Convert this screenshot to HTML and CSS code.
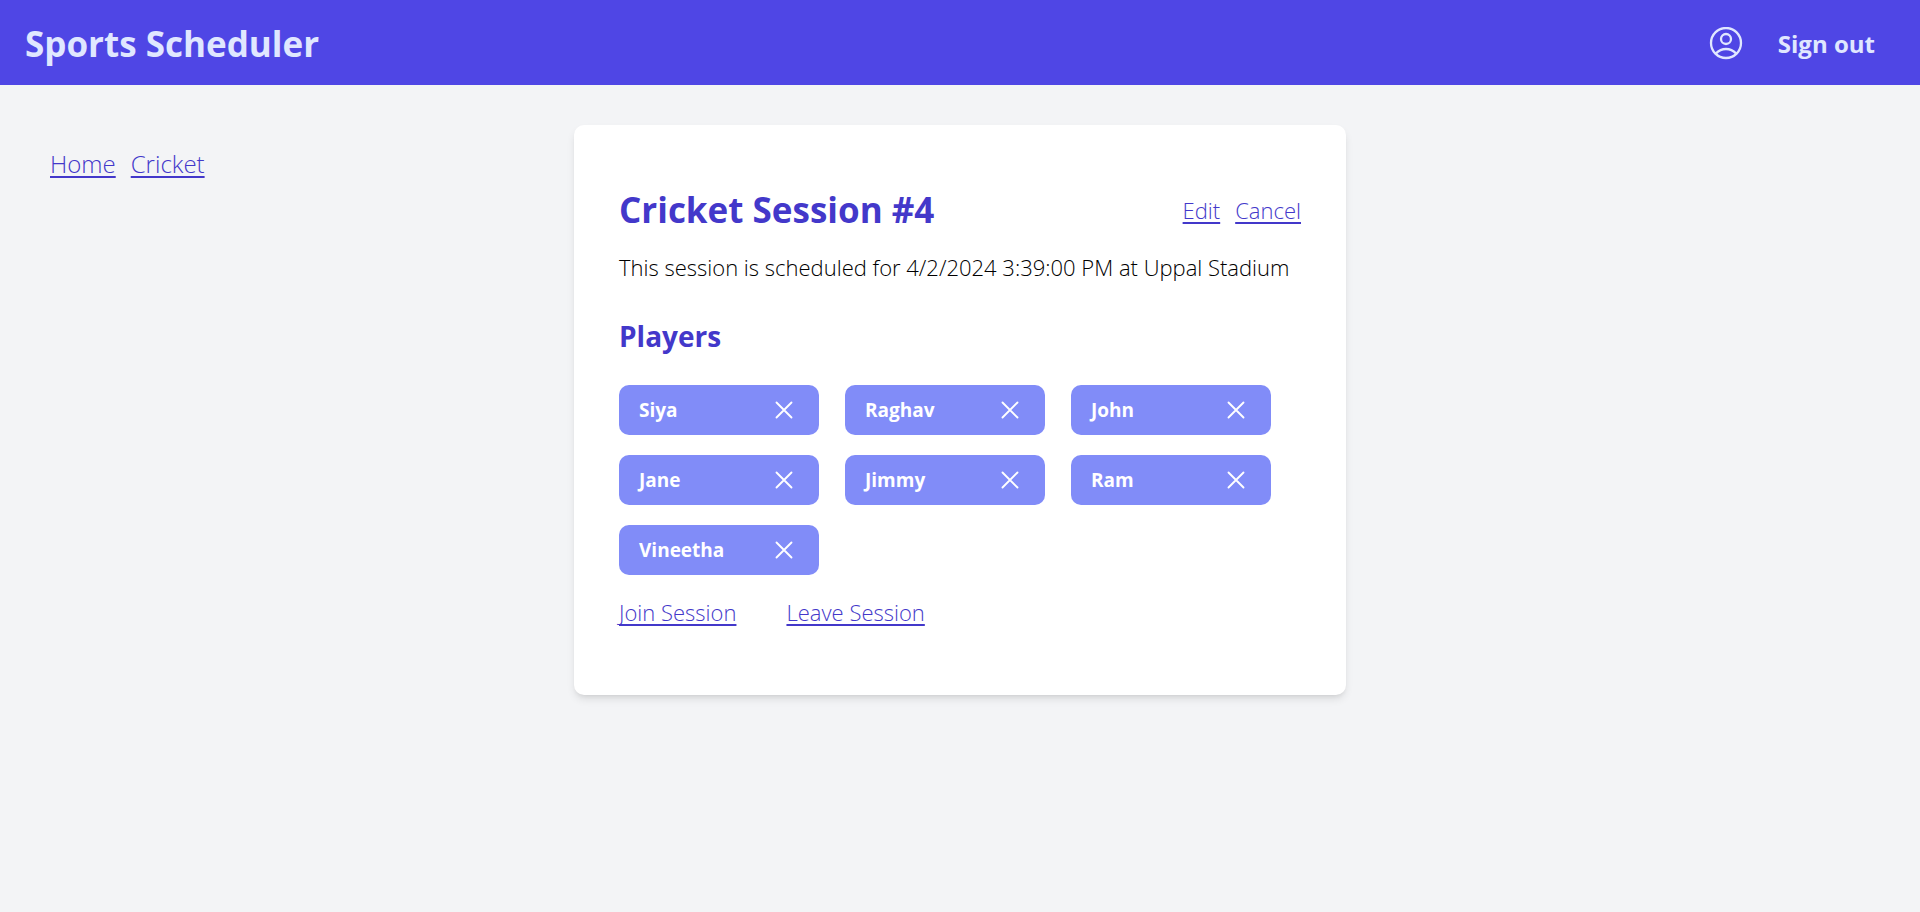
FILE: index.html
```html
<!DOCTYPE html>
<html lang="en">
<head>
  <meta charset="utf-8">
  <meta name="viewport" content="width=device-width, initial-scale=1">
  <title>Sports Scheduler</title>
  <link rel="stylesheet" href="styles.css">
</head>
<body>
  <svg class="sprite" aria-hidden="true">
    <symbol id="icon-x" viewBox="0 0 24 24"><path d="M6 6l12 12M18 6L6 18"/></symbol>
  </svg>
  <header class="topbar">
    <h1 class="brand">Sports Scheduler</h1>
    <nav class="account" aria-label="Account">
      <a class="profile" href="#profile" aria-label="Profile">
        <svg class="profile-icon" viewBox="0 0 34 34" aria-hidden="true">
          <circle cx="17" cy="16" r="15"/>
          <circle cx="17" cy="12" r="5"/>
          <path d="M7 26.4C10 23.2 13 22 17 22s7 1.2 10 4.4"/>
        </svg>
      </a>
      <a class="signout" href="#signout">Sign out</a>
    </nav>
  </header>
  <main class="page">
    <nav class="breadcrumbs" aria-label="Breadcrumb">
      <a class="link" href="#home">Home</a>
      <a class="link" href="#cricket">Cricket</a>
    </nav>
    <article class="card">
      <div class="card-head">
        <h2 class="title">Cricket Session #4</h2>
        <div class="actions">
          <a class="link" href="#edit">Edit</a>
          <a class="link" href="#cancel">Cancel</a>
        </div>
      </div>
      <p class="schedule">This session is scheduled for 4/2/2024 3:39:00 PM at Uppal Stadium</p>
      <h3 class="subtitle">Players</h3>
      <ul class="players">
        <li class="player">Siya<button class="remove" type="button" aria-label="Remove Siya"><svg class="x-icon"><use href="#icon-x"/></svg></button></li>
        <li class="player">Raghav<button class="remove" type="button" aria-label="Remove Raghav"><svg class="x-icon"><use href="#icon-x"/></svg></button></li>
        <li class="player">John<button class="remove" type="button" aria-label="Remove John"><svg class="x-icon"><use href="#icon-x"/></svg></button></li>
        <li class="player">Jane<button class="remove" type="button" aria-label="Remove Jane"><svg class="x-icon"><use href="#icon-x"/></svg></button></li>
        <li class="player">Jimmy<button class="remove" type="button" aria-label="Remove Jimmy"><svg class="x-icon"><use href="#icon-x"/></svg></button></li>
        <li class="player">Ram<button class="remove" type="button" aria-label="Remove Ram"><svg class="x-icon"><use href="#icon-x"/></svg></button></li>
        <li class="player">Vineetha<button class="remove" type="button" aria-label="Remove Vineetha"><svg class="x-icon"><use href="#icon-x"/></svg></button></li>
      </ul>
      <div class="membership">
        <a class="link" href="#join">Join Session</a>
        <a class="link" href="#leave">Leave Session</a>
      </div>
    </article>
  </main>
</body>
</html>
```

FILE: styles.css
```css
* { box-sizing: border-box; }

body {
  margin: 0;
  min-height: 100vh;
  background: #f3f4f6;
  color: #000;
  font-family: "Open Sans", "Noto Sans", sans-serif;
  font-size: 22px;
  font-weight: 350;
  line-height: 30px;
}

h1, h2, h3, p, ul { margin: 0; padding: 0; }

.sprite { display: none; }

.topbar {
  display: flex;
  align-items: center;
  justify-content: space-between;
  padding: 21px 45px 19px 25px;
  background: #4f46e5;
  color: #e0e7ff;
}

.brand {
  font-size: 35px;
  font-weight: 700;
  line-height: 45px;
}

.account { display: flex; align-items: center; gap: 35px; }

.profile, .signout { color: inherit; text-decoration: none; }

.profile { display: flex; }

.profile-icon {
  width: 34px;
  height: 34px;
  fill: none;
  stroke: currentColor;
  stroke-width: 2.3;
  stroke-linecap: round;
}

.signout { font-size: 24px; font-weight: 700; }

.link {
  color: #4338ca;
  text-decoration: underline;
  text-decoration-thickness: 2px;
  text-underline-offset: 3px;
  text-decoration-skip-ink: none;
}

.page {
  display: grid;
  grid-template-columns: 1fr minmax(0, 772px) 1fr;
  align-items: start;
  padding-top: 40px;
}

.breadcrumbs {
  display: flex;
  gap: 15px;
  padding: 24px 50px;
  font-size: 24px;
}

.card {
  padding: 60px 45px 68px;
  border-radius: 10px;
  background: #fff;
  box-shadow: 0 5px 8px -1px rgba(0, 0, 0, 0.1), 0 3px 5px -3px rgba(0, 0, 0, 0.1);
}

.card-head {
  display: flex;
  align-items: center;
  justify-content: space-between;
}

.title {
  color: #4338ca;
  font-size: 35px;
  font-weight: 700;
  line-height: 50px;
}

.actions { display: flex; gap: 15px; }

.schedule { margin-top: 17px; }

.subtitle {
  margin-top: 34px;
  color: #4338ca;
  font-size: 28px;
  font-weight: 700;
  line-height: 40px;
}

.players {
  display: grid;
  grid-template-columns: repeat(auto-fill, 200px);
  gap: 20px 26px;
  margin-top: 29px;
  list-style: none;
}

.player {
  display: flex;
  align-items: center;
  justify-content: space-between;
  height: 50px;
  padding: 0 20px;
  border-radius: 10px;
  background: #818cf8;
  color: #fff;
  font-size: 19px;
  font-weight: 700;
}

.remove {
  display: flex;
  padding: 0;
  border: 0;
  background: none;
  color: inherit;
  cursor: pointer;
}

.x-icon {
  width: 30px;
  height: 30px;
  fill: none;
  stroke: currentColor;
  stroke-width: 1.5;
  stroke-linecap: round;
}

.membership { display: flex; gap: 50px; margin-top: 22px; }
```
